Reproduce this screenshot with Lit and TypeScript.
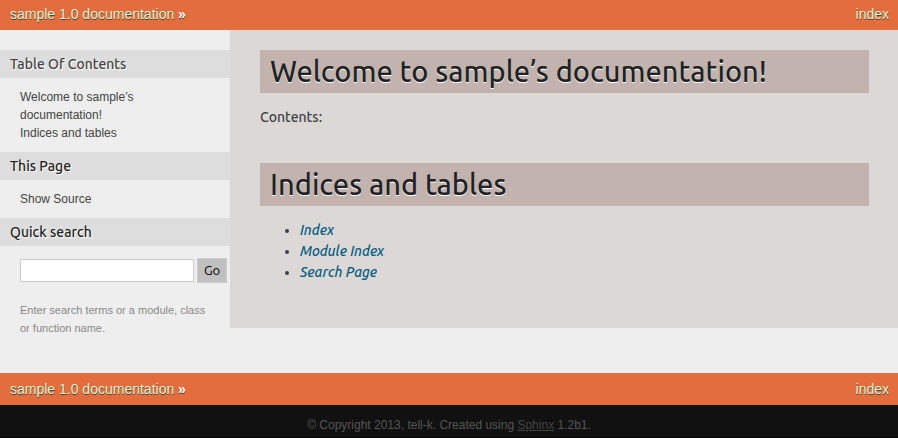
import { LitElement, html, css } from "lit";
import { customElement } from "lit/decorators.js";

@customElement("app-root")
export class AppRoot extends LitElement {
  static styles = css`
    :host {
      display: flex;
      flex-direction: column;
      min-height: 100vh;
      background: #000;
      color: #3e4349;
      font-family: "Liberation Sans", Arial, sans-serif;
      font-size: 14px;
    }
    a {
      text-decoration: none;
    }
    .related {
      display: flex;
      justify-content: space-between;
      padding: 0 9px 2px 10px;
      line-height: 28px;
      background: #e36d3c;
      color: #fff;
      text-shadow: 0 1px 0 #444;
    }
    .related.bottom {
      padding-top: 2px;
    }
    .related a {
      color: #e2f3cc;
    }
    .related .separator {
      font-weight: 700;
    }
    .document {
      display: flex;
      align-items: flex-start;
      background: #eee;
    }
    .sidebar {
      flex: 0 0 230px;
      padding: 20px 0 36px;
      font-size: 12px;
      line-height: 18px;
    }
    .sidebar h3 {
      margin: 0;
      padding: 0 10px;
      background: #ddd;
      color: #222;
      font: 500 14px/28px Ubuntu, "Noto Sans", sans-serif;
      text-shadow: 1px 1px 0 #fff;
    }
    .sidebar a {
      color: #444;
    }
    .sidebar ul {
      list-style: none;
      margin: 10px 20px;
      padding: 0;
    }
    .search {
      display: flex;
      align-items: center;
      gap: 3px;
      margin: 12px 3px 18px 20px;
    }
    .search input {
      flex: 1;
      min-width: 0;
      height: 23px;
      box-sizing: border-box;
      border: 1px solid #ccc;
      background: #fff;
      font: inherit;
    }
    .search button {
      width: 30px;
      height: 25px;
      padding: 0 0 2px;
      border: 1px solid #ccc;
      background: #c0c0c0;
      color: #000;
      font: 13px/20px Ubuntu, "Noto Sans", sans-serif;
    }
    .tip {
      margin: 0 20px;
      color: #888;
      font-size: 11px;
    }
    .body {
      flex: 1;
      min-width: 0;
      padding: 20px 29px 45px 30px;
      background: #dcd8d5;
      font: 500 14px/21px Ubuntu, "Noto Sans", sans-serif;
    }
    h1 {
      margin: 0;
      padding: 0 10px;
      background: #c2b3ae;
      color: #212224;
      font-size: 29px;
      font-weight: 500;
      line-height: 43px;
      text-shadow: 0 1px 0 #fff;
    }
    .body p {
      margin: 14px 0 35px;
    }
    .body ul {
      margin: 14px 0 0;
      padding-left: 40px;
    }
    .body a {
      color: #005b81;
      font-style: italic;
    }
    .footer {
      padding: 10px 0 2px;
      background: #111;
      color: #555;
      font-size: 12px;
      line-height: 20px;
      text-align: center;
    }
    .footer a {
      color: #444;
      text-decoration: underline;
    }
  `;

  private related(position: string) {
    return html`
      <nav class="related ${position}" aria-label="Related, ${position}">
        <span><a href="#top">sample 1.0 documentation</a> <span class="separator">»</span></span>
        <a href="#index">index</a>
      </nav>
    `;
  }

  render() {
    return html`
      ${this.related("top")}
      <div class="document">
        <aside class="sidebar">
          <h3><a href="#top">Table Of Contents</a></h3>
          <ul>
            <li><a href="#welcome">Welcome to sample’s documentation!</a></li>
            <li><a href="#indices">Indices and tables</a></li>
          </ul>
          <h3>This Page</h3>
          <ul>
            <li><a href="#source">Show Source</a></li>
          </ul>
          <h3 id="search-title">Quick search</h3>
          <form class="search" role="search">
            <input type="text" name="q" aria-labelledby="search-title" aria-describedby="search-tip" />
            <button type="submit">Go</button>
          </form>
          <p class="tip" id="search-tip">
            Enter search terms or a module, class or function name.
          </p>
        </aside>
        <main class="body">
          <section id="welcome">
            <h1>Welcome to sample’s documentation!</h1>
            <p>Contents:</p>
          </section>
          <section id="indices">
            <h1>Indices and tables</h1>
            <ul>
              <li><a href="#index">Index</a></li>
              <li><a href="#modules">Module Index</a></li>
              <li><a href="#search">Search Page</a></li>
            </ul>
          </section>
        </main>
      </div>
      ${this.related("bottom")}
      <footer class="footer">
        © Copyright 2013, tell-k. Created using <a href="#sphinx">Sphinx</a> 1.2b1.
      </footer>
    `;
  }
}
